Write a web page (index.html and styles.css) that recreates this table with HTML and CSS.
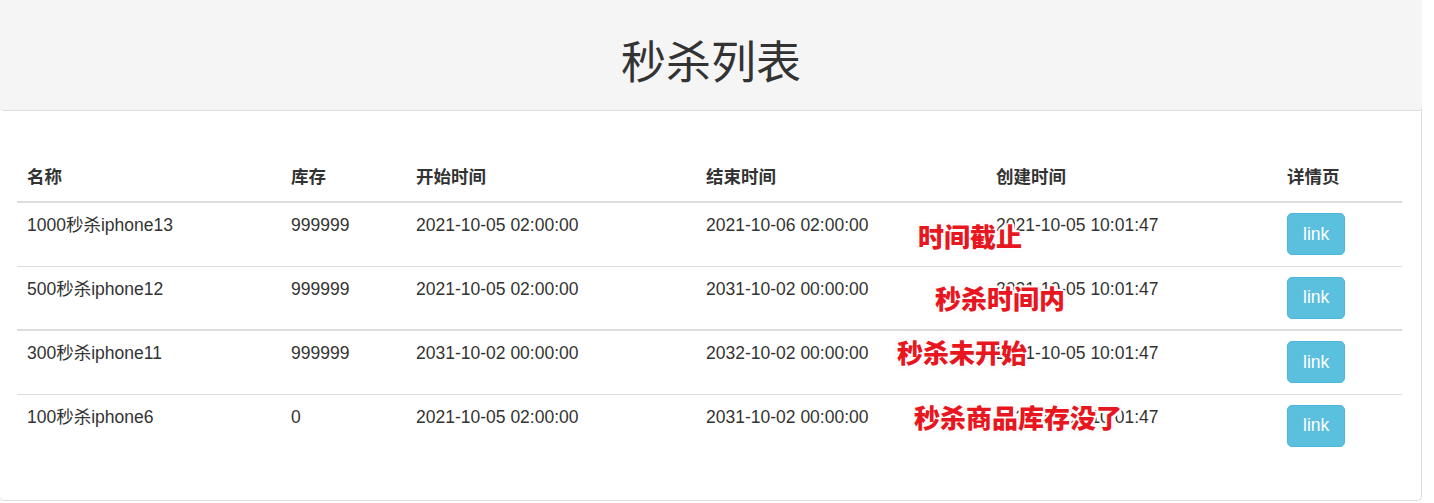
FILE: index.html
```html
<!DOCTYPE html>
<html lang="zh-CN">
<head>
<meta charset="utf-8">
<title>秒杀列表</title>
<link rel="stylesheet" href="styles.css">
</head>
<body>
<div class="panel">
  <div class="panel-heading">
    <h2 class="panel-title">秒杀列表</h2>
  </div>
  <div class="panel-body">
    <table class="table">
      <colgroup>
        <col class="c-name"><col class="c-stock"><col class="c-start"><col class="c-end"><col class="c-create"><col class="c-detail">
      </colgroup>
      <thead>
        <tr>
          <th>名称</th><th>库存</th><th>开始时间</th><th>结束时间</th><th>创建时间</th><th>详情页</th>
        </tr>
      </thead>
      <tbody>
        <tr>
          <td>1000秒杀iphone13</td><td>999999</td><td>2021-10-05 02:00:00</td><td>2021-10-06 02:00:00</td>
          <td class="created">2021-10-05 10:01:47<span class="note note-1">时间截止</span></td>
          <td><a class="btn" href="#">link</a></td>
        </tr>
        <tr class="row-thick">
          <td>500秒杀iphone12</td><td>999999</td><td>2021-10-05 02:00:00</td><td>2031-10-02 00:00:00</td>
          <td class="created">2021-10-05 10:01:47<span class="note note-2">秒杀时间内</span></td>
          <td><a class="btn" href="#">link</a></td>
        </tr>
        <tr class="row-after-thick">
          <td>300秒杀iphone11</td><td>999999</td><td>2031-10-02 00:00:00</td><td>2032-10-02 00:00:00</td>
          <td class="created">2021-10-05 10:01:47<span class="note note-3">秒杀未开始</span></td>
          <td><a class="btn" href="#">link</a></td>
        </tr>
        <tr>
          <td>100秒杀iphone6</td><td>0</td><td>2021-10-05 02:00:00</td><td>2031-10-02 00:00:00</td>
          <td class="created">2021-10-05 10:01:47<span class="note note-4">秒杀商品库存没了</span></td>
          <td><a class="btn" href="#">link</a></td>
        </tr>
      </tbody>
    </table>
  </div>
</div>
</body>
</html>
```

FILE: styles.css
```css
* { box-sizing: border-box; }

html, body {
  margin: 0;
  padding: 0;
  background: #fff;
}

body {
  font-family: "Liberation Sans", Arial, "Noto Sans CJK SC", sans-serif;
  font-size: 17.5px;
  line-height: 25px;
  color: #333;
}

.panel {
  width: 1423px;
  height: 501px;
  margin-left: -1px;
  border: 1px solid #ddd;
  border-top: none;
  border-radius: 0 0 5px 5px;
  background: #fff;
}

.panel-heading {
  background: #f5f5f5;
  border-bottom: 1px solid #ddd;
  border-radius: 0 0 4px 4px;
  margin-right: -1px;
  height: 111px;
  padding-top: 35px;
  text-align: center;
}

.panel-title {
  margin: 0;
  font-family: "Noto Sans CJK SC", "Liberation Sans", sans-serif;
  font-weight: 400;
  font-size: 45px;
  line-height: 50px;
  color: #333;
}

.panel-body {
  padding: 44px 18px 18px 17px;
}

.table {
  width: 1385px;
  table-layout: fixed;
  border-collapse: collapse;
  border-spacing: 0;
}

.c-name { width: 264px; }
.c-stock { width: 125px; }
.c-start { width: 290px; }
.c-end { width: 290px; }
.c-create { width: 291px; }
.c-detail { width: 125px; }

.table th {
  text-align: left;
  font-weight: 700;
  padding: 10px 10px 11px;
  line-height: 25px;
  vertical-align: bottom;
  border-bottom: 2px solid #ddd;
  font-family: "Liberation Sans", Arial, "Noto Sans CJK SC", sans-serif;
}

.table td {
  padding: 10px 10px 10.5px;
  line-height: 25px;
  vertical-align: top;
  border-top: 1px solid #ddd;
  white-space: nowrap;
}

.table .row-after-thick td {
  border-top: 2px solid #ddd;
}

.table td.created {
  position: relative;
}

.note {
  position: absolute;
  font-family: "Noto Sans CJK SC", sans-serif;
  font-weight: 900;
  font-size: 26px;
  line-height: 26px;
  color: #e8161e;
  white-space: nowrap;
  text-shadow:
    -2px 0 0 #fff, 2px 0 0 #fff, 0 -2px 0 #fff, 0 2px 0 #fff,
    -1.5px -1.5px 0 #fff, 1.5px -1.5px 0 #fff, -1.5px 1.5px 0 #fff, 1.5px 1.5px 0 #fff,
    0 0 4px rgba(255, 160, 160, 0.6);
}

.note-1 { left: -68px; top: 20px; }
.note-2 { left: -51px; top: 18px; }
.note-3 { left: -89px; top: 8px; }
.note-4 { left: -72px; top: 9px; }

.btn {
  display: inline-block;
  padding: 7.5px 15px;
  font-size: 17.5px;
  line-height: 25px;
  color: #fff;
  background: #5bc0de;
  border: 1px solid #46b8da;
  border-radius: 5px;
  text-decoration: none;
  font-family: "Liberation Sans", Arial, sans-serif;
}
```
